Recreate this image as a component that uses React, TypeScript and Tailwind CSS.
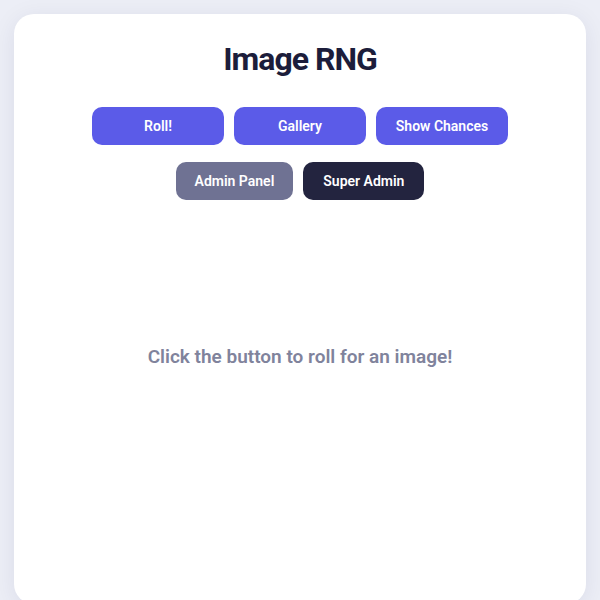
export default function App() {
  return (
    <div className="min-h-screen bg-[#eceef6] p-[14px] font-['Roboto',sans-serif]">
      <div className="flex min-h-[590px] flex-col items-center rounded-[20px] bg-white px-8 pt-[25px] shadow-[0_4px_24px_rgba(30,30,80,0.08)]">
        <h1 className="text-[32px] font-bold leading-[40px] tracking-[-1px] text-[#1c1d3b]">Image RNG</h1>

        <div className="mt-[28px] flex gap-[10px]">
          <button className="h-[38px] w-[132px] rounded-[10px] bg-[#5b5be8] text-[14px] font-semibold text-white">Roll!</button>
          <button className="h-[38px] w-[132px] rounded-[10px] bg-[#5b5be8] text-[14px] font-semibold text-white">Gallery</button>
          <button className="h-[38px] w-[132px] rounded-[10px] bg-[#5b5be8] text-[14px] font-semibold text-white">Show Chances</button>
        </div>

        <div className="mt-[17px] flex gap-[10px]">
          <button className="h-[38px] rounded-[10px] bg-[#6f7293] px-[19px] text-[14px] font-semibold text-white">Admin Panel</button>
          <button className="h-[38px] rounded-[10px] bg-[#23243f] px-5 text-[14px] font-semibold text-white">Super Admin</button>
        </div>

        <p className="mt-[143px] text-[19px] font-semibold text-[#80839c]">Click the button to roll for an image!</p>
      </div>
    </div>
  );
}
